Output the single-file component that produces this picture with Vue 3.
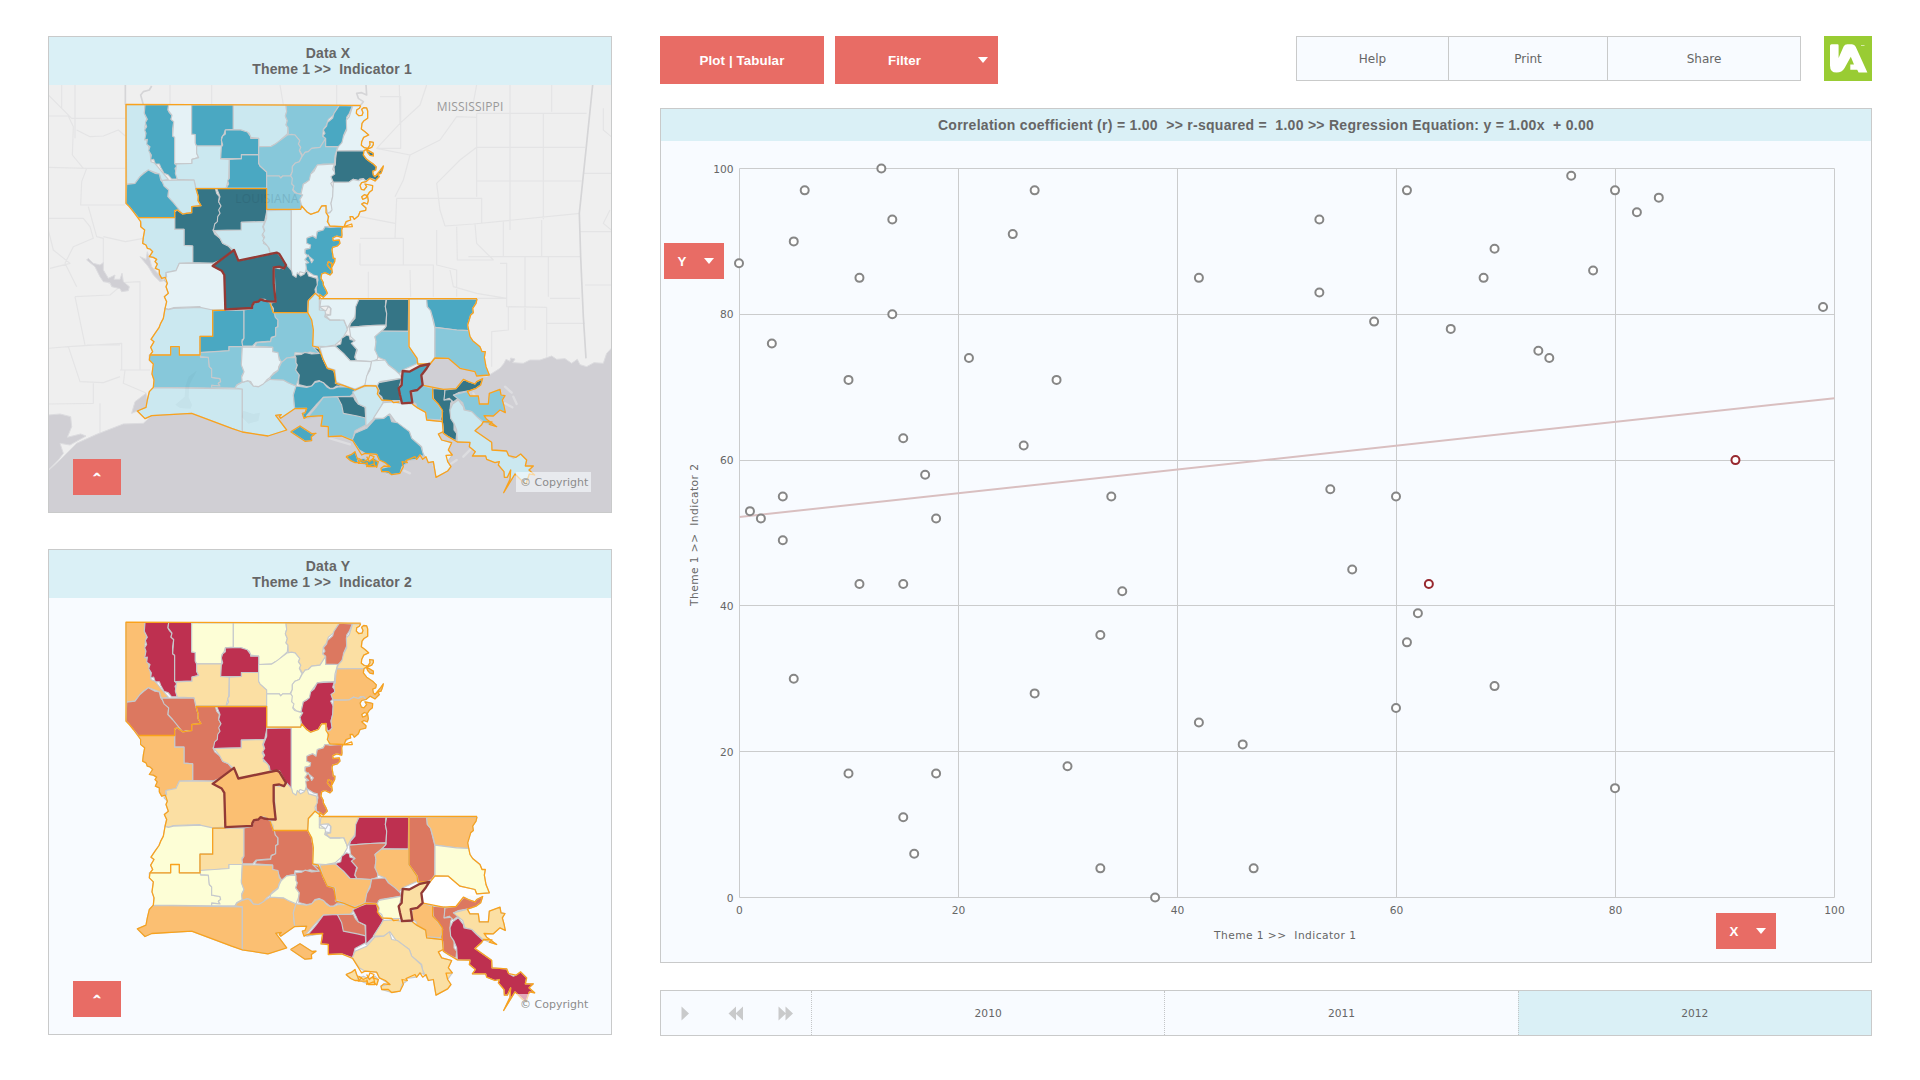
<script setup>
// Map tiles: every outline is written relative to the tile it lies in.
const tiles = { nw: [0, 0], ne: [840, 0], sw: [0, 720], se: [840, 720] }

function pts(tile, s) {
  const [ox, oy] = tiles[tile]
  return s.trim().split(/\s+/).map(p => {
    const [x, y] = p.split(',').map(Number)
    return `${x + ox},${y + oy}`
  }).join(' ')
}

const blues = ['#e5f2f6', '#cbe8f0', '#87c8da', '#4aa8c2', '#357586']
const reds = ['#fdfed6', '#fbdfa3', '#fbbf72', '#dc7860', '#be3050']

// [x class, y class, tile, outline]
const parishes = [
  [1, 2, 'nw', '258,224 315,224 313,250 320,265 315,290 318,322 330,365 333,395 345,400 365,425 385,448 365,453 358,432 340,425 325,420 310,430 300,440 285,460 260,463'],
  [3, 4, 'nw', '315,224 386,224 384,240 388,248 396,256 393,268 401,275 398,298 398,318 404,322 404,400 412,410 405,415 409,430 410,447 395,447 385,435 372,430 362,412 358,402 346,402 341,388 332,390 334,375 326,362 330,350 320,343 322,328 314,330 318,310 314,300 320,290 316,278 322,268 313,250'],
  [0, 4, 'nw', '386,224 455,224 455,312 466,314 466,340 470,348 470,370 476,383 456,388 456,400 404,401 404,322 398,318 401,275 393,268 396,256 384,240'],
  [3, 0, 'nw', '455,225 580,225 580,298 556,300 552,312 545,322 545,348 470,348 466,340 466,314 455,312'],
  [1, 0, 'nw', '580,225 738,225 740,245 736,258 742,272 738,285 744,292 742,312 722,330 718,338 706,342 694,349 656,350 656,325 632,322 628,310 605,300 580,300'],
  [1, 1, 'nw', '470,348 545,348 542,386 568,388 566,445 558,475 468,475 462,450 412,448 406,430 410,402 456,400 456,388 476,383 470,370'],
  [3, 1, 'nw', '568,388 604,386 604,374 656,374 656,400 660,408 680,426 680,475 558,475 566,462 563,452 568,445'],
  [3, 4, 'nw', '556,300 600,299 622,306 632,320 632,325 656,325 656,374 604,374 604,386 542,386 544,352 548,345 544,330 548,318 556,312'],
  [2, 1, 'nw', '738,225 898,226 880,256 865,268 860,285 850,298 848,318 857,325 852,340 840,352 815,355 805,365 795,367 790,380 778,360 782,352 775,342 779,332 765,315 745,315 744,292 738,285 742,272 736,258 740,245'],
  [2, 0, 'nw', '742,315 755,313 765,315 779,332 775,342 782,352 778,362 786,378 778,395 765,400 757,410 757,425 750,438 728,438 722,444 718,438 680,438 680,426 660,408 656,400 656,350 694,349 706,342 722,330'],
  [2, 0, 'nw', '857,325 857,350 893,350 888,368 885,378 883,402 850,402 832,405 815,428 810,450 790,462 783,492 770,490 760,480 755,462 752,438 757,425 757,410 765,400 778,395 786,380 795,367 805,365 815,355 840,352'],
  [2, 0, 'nw', '680,438 718,438 722,444 728,438 752,438 757,445 755,462 762,468 758,480 764,488 778,492 788,495 780,508 784,520 782,538 680,538'],
  [0, 4, 'nw', '850,404 883,402 878,418 886,428 876,445 878,455 872,460 880,475 878,500 873,520 878,540 862,552 858,527 845,528 835,545 812,553 800,545 785,528 780,508 788,495 783,492 790,462 798,458 808,450 812,432 822,424 832,405'],
  [3, 3, 'nw', '898,226 937,228 928,250 920,262 922,290 910,318 914,325 906,338 902,350 857,349 857,325 848,318 855,310 850,300 860,288 862,278 878,264 882,250'],
  [0, 1, 'ne', '98,228 122,228 118,235 110,240 109,250 116,257 126,256 129,248 125,238 131,233 140,234 143,243 143,265 132,272 126,280 124,297 135,305 146,315 131,322 125,335 124,346 133,353 143,355 150,345 149,335 160,337 160,344 155,352 140,358 132,362 50,363 55,350 66,338 70,320 80,300 79,270 88,260'],
  [4, 2, 'ne', '50,363 132,362 130,375 140,388 150,395 160,402 169,411 167,420 158,424 160,435 165,440 180,422 190,408 187,420 183,430 173,433 178,440 165,453 162,448 150,445 138,453 130,446 120,447 115,452 100,448 88,456 75,457 40,457 33,440 44,432 42,410 46,405 47,385'],
  [4, 2, 'ne', '140,360 150,366 160,370 160,378 150,376 143,368'],
  [0, 2, 'ne', '40,457 75,457 88,456 100,448 115,452 130,446 138,455 125,458 120,466 124,478 132,480 140,470 135,462 150,465 158,467 157,480 148,487 142,497 133,494 125,500 128,508 138,504 142,495 145,512 142,522 132,518 125,522 138,534 137,541 120,545 115,558 103,568 98,560 90,560 92,570 85,572 75,583 72,590 30,590 22,575 22,550 30,548 36,540 33,520 38,500'],
  [3, 3, 'nw', '260,463 285,460 300,440 312,430 325,420 345,430 358,432 362,450 380,470 386,480 384,500 398,515 412,528 420,540 404,542 404,563 295,563 280,545 268,530 258,520'],
  [1, 3, 'nw', '365,451 462,450 468,478 475,500 474,512 483,527 455,530 455,548 440,548 428,552 418,540 398,515 384,500 386,480 372,468'],
  [4, 3, 'nw', '468,475 526,475 530,490 538,500 536,515 543,528 540,560 533,578 528,580 524,595 519,600 524,612 540,625 548,640 565,648 575,660 580,675 518,700 458,698 458,648 432,646 432,598 404,598 404,545 412,540 428,552 455,548 455,530 483,527 474,512 475,500'],
  [4, 4, 'nw', '530,475 680,475 680,545 674,575 604,577 604,600 520,602 524,582 532,575 533,560 540,550 536,540 543,528 536,515 540,500'],
  [1, 1, 'nw', '522,602 604,600 604,577 674,575 668,590 674,605 666,615 674,628 670,640 684,648 690,668 690,672 595,692 580,660 565,648 548,640 540,625'],
  [1, 4, 'nw', '680,542 754,540 754,735 745,730 738,705 718,668 690,668 688,655 680,645 668,632 674,622 668,612 674,602 670,590 680,565'],
  [0, 0, 'nw', '754,539 782,538 785,528 800,545 812,553 835,545 845,528 858,527 862,552 868,590 855,590 850,600 832,605 828,625 818,618 805,622 800,632 812,645 810,655 795,658 796,670 805,680 795,690 806,700 800,712 795,730 780,725 775,735 765,742 757,738 754,725'],
  [3, 3, 'nw', '870,592 908,590 905,600 906,615 905,622 890,618 878,624 880,632 898,630 900,640 892,648 878,652 876,660 880,685 885,685 884,695 872,718 862,705 865,695 875,700 875,715 877,728 870,735 855,728 845,732 843,745 850,758 850,765 858,780 862,790 850,802 840,794 830,790 828,770 834,750 832,738 820,735 800,722 797,700 806,698 795,688 805,675 815,698 820,690 808,680 795,670 796,658 810,655 812,645 800,640 800,625 818,618 828,625 832,605 850,600 855,590'],
  [1, 2, 'nw', '295,563 404,563 404,598 432,598 432,646 458,648 458,698 418,700 408,722 378,728 376,742 365,745 358,732 358,720 346,715 352,702 345,695 350,688 340,682 328,680 338,665 330,657 322,655 318,645 308,640 310,622 314,600 305,592 302,575'],
  [0, 1, 'nw', '418,700 518,700 530,715 545,722 553,735 555,838 520,840 480,838 480,830 400,833 385,838 375,835 380,815 373,800 385,790 378,770 382,760 372,750 380,740 378,728 408,722'],
  [1, 0, 'nw', '375,836 385,839 400,835 480,832 518,840 518,919 480,919 480,975 418,975 418,950 392,950 392,975 330,975 338,965 332,952 342,935 333,928 345,910 357,893 362,880 370,865'],
  [4, 1, 'nw', '702,712 718,716 740,705 755,722 758,735 768,742 772,728 782,738 793,732 800,720 806,738 830,745 832,765 825,778 828,795 818,798 805,812 803,848 700,848 700,835 690,820 707,815'],
  [4, 2, 'nw', '518,708 582,660 595,692 710,668 718,675 738,705 730,717 718,710 700,712 703,760 707,815 685,816 675,808 662,808 655,815 642,817 637,826 640,835 556,837 553,735 545,722'],
  [3, 1, 'nw', '518,842 612,840 612,925 606,930 608,950 567,950 567,963 480,968 480,919 518,919'],
  [3, 3, 'nw', '612,840 637,836 640,820 655,815 662,808 675,810 685,816 692,820 700,848 705,848 706,860 714,870 713,890 707,893 707,918 694,922 692,933 648,937 638,948 608,948 606,935 612,925'],
  [2, 3, 'nw', '703,848 803,848 815,870 820,900 820,950 835,955 838,970 828,970 810,966 795,970 765,968 763,980 740,985 725,998 718,985 712,970 698,965 698,952 645,948 650,938 692,935 694,924 707,918 707,893 714,890 714,870 706,862'],
  [2, 0, 'sw', '328,255 392,255 392,230 418,230 418,255 480,255 482,262 505,262 508,290 515,297 515,322 540,326 542,335 535,340 540,348 515,346 515,354 340,352 342,330 336,312 340,282 328,270'],
  [2, 0, 'sw', '480,248 567,242 567,230 607,230 604,280 612,305 605,318 607,335 590,345 585,354 515,353 515,346 540,348 535,340 542,335 540,326 515,322 515,297 508,290 505,262 482,260'],
  [1, 2, 'sw', '340,353 607,357 607,486 575,475 455,430 335,437 315,446 292,423 318,412 322,390 328,365'],
  [1, 2, 'sw', '607,357 585,354 592,345 607,337 625,332 640,348 655,350 670,340 690,328 730,330 745,338 768,348 760,375 762,400 764,416 722,445 718,440 724,434 707,436 740,480 684,498 607,486'],
  [0, 2, 'sw', '607,231 698,232 698,245 714,248 718,270 724,275 716,290 715,300 700,310 690,322 680,330 670,342 655,350 640,348 632,335 622,332 607,337 605,322 612,305 604,285'],
  [2, 0, 'sw', '724,278 740,264 755,262 768,263 768,278 772,285 767,300 778,315 775,330 768,348 745,338 730,330 690,328 692,320 714,302 718,290'],
  [4, 3, 'sw', '764,255 785,253 795,247 815,252 838,250 818,230 840,238 848,265 862,295 880,300 888,320 886,340 910,348 890,348 880,355 870,355 858,345 850,338 838,332 825,335 815,348 800,350 776,344 776,330 778,315 767,300 772,285 768,278 768,263'],
  [3, 2, 'sw', '768,348 800,352 815,348 825,337 838,334 850,338 860,350 870,356 880,356 895,350 940,352 945,365 930,380 900,382 850,382 828,405 800,437 802,442 792,445 787,430 795,428 800,415 764,414 760,375'],
  [3, 2, 'sw', '752,485 780,468 816,491 828,490 814,500 815,512 795,514'],
  [2, 4, 'sw', '850,382 892,380 903,390 908,405 910,423 950,432 976,442 977,465 945,482 938,510 905,498 865,500 865,470 843,468 848,437 800,445 828,412'],
  [4, 3, 'se', '52,380 100,379 106,392 115,402 135,412 137,444 112,438 70,430 65,405'],
  [1, 4, 'se', '98,366 120,355 140,348 170,348 175,375 190,395 182,412 162,445 138,470 137,412 115,402 108,385'],
  [1, 0, 'sw', '805,92 818,80 825,70 838,75 838,110 855,122 858,140 870,150 900,150 910,148 920,170 922,180 908,205 885,225 858,230 818,228 820,180 815,150 803,128'],
  [0, 1, 'sw', '843,87 956,87 950,120 945,140 930,160 922,175 912,150 870,150 858,138 870,135 872,115 862,108 840,110'],
  [4, 4, 'se', '117,88 198,88 196,110 200,130 198,165 150,167 88,172 92,160 105,145 107,110'],
  [4, 4, 'se', '200,88 266,88 265,184 185,183 198,170 200,130 196,110'],
  [0, 3, 'se', '88,172 150,167 198,165 196,172 185,183 165,200 168,215 165,240 175,250 172,268 155,275 110,272 104,260 112,240 92,218 105,212 92,200'],
  [4, 4, 'se', '45,228 62,222 65,205 80,195 88,198 90,208 104,212 94,220 110,238 104,262 110,272 92,274 70,250'],
  [2, 2, 'se', '165,200 185,183 266,184 266,230 290,265 293,280 248,300 235,314 225,300 205,285 195,270 175,262 165,240 168,215'],
  [0, 3, 'se', '267,88 320,88 322,110 332,122 340,155 345,175 344,262 335,275 318,283 295,285 292,265 267,230'],
  [3, 2, 'se', '320,88 471,87 468,100 458,115 460,128 452,135 443,165 446,182 410,180 345,172 340,150 332,122 322,110'],
  [2, 0, 'se', '345,172 410,180 446,182 450,200 458,212 480,230 486,245 496,245 493,262 498,290 508,315 470,318 465,305 420,295 385,265 345,264'],
  [0, 2, 'se', '0,232 45,228 70,250 90,272 155,275 152,290 145,305 135,345 105,357 70,345 48,335 45,300 22,293 10,270'],
  [0, 3, 'se', '155,273 195,270 205,285 225,300 240,314 245,325 180,335 175,347 135,345 140,318 150,300'],
  [4, 0, 'se', '176,338 245,325 238,350 242,392 190,392 185,380 175,372 178,362 172,348'],
  [2, 2, 'se', '308,346 338,355 338,385 360,402 368,420 368,450 320,447 317,427 290,412 288,402 277,395 275,368 290,360'],
  [3, 1, 'se', '248,303 268,305 300,288 328,282 318,298 304,316 308,345 292,360 272,364 277,398 246,400 240,375 236,355 245,345 246,325'],
  [4, 3, 'se', '338,355 375,358 373,390 398,388 392,400 390,420 393,445 402,460 402,480 410,490 408,512 385,500 370,490 368,460 362,448 368,425 355,405 340,385'],
  [4, 3, 'se', '375,360 408,356 432,328 445,335 465,342 470,335 488,326 482,345 468,355 450,362 415,368 402,375 425,393 410,388 400,396 388,385 372,390'],
  [2, 1, 'se', '400,375 442,364 450,378 475,378 478,402 505,402 508,370 540,358 543,375 555,377 547,390 552,408 556,428 540,420 520,438 495,438 500,448 530,470 505,462 490,455 470,440 455,425 435,420 428,398'],
  [1, 4, 'se', '415,390 430,410 432,420 455,425 470,440 490,458 485,464 465,482 515,517 516,540 560,543 566,557 580,565 588,562 602,552 620,570 616,588 640,588 627,600 644,615 628,612 618,642 608,635 585,612 551,668 570,628 572,600 562,622 553,622 552,605 535,585 538,575 525,578 500,568 497,558 457,558 466,545 448,530 450,517 412,516 410,480 402,460 392,445 390,420 398,402'],
  [0, 1, 'se', '160,445 190,398 220,396 240,400 277,402 290,412 317,427 320,450 367,455 370,485 355,492 365,510 395,518 385,540 397,555 383,575 393,590 383,603 348,622 340,575 325,578 308,548 305,530 275,505 268,485 230,460 210,432 190,445'],
  [3, 1, 'se', '97,510 105,490 140,475 165,447 192,445 208,432 215,455 232,458 268,485 275,505 303,530 312,560 300,555 290,568 258,572 262,578 246,590 240,610 215,614 185,605 183,595 205,590 210,590 178,570 170,553 135,550 118,540'],
  [3, 1, 'se', '78,560 95,553 105,545 110,560 118,578 105,578 92,572'],
  [3, 1, 'se', '112,572 130,565 145,572 165,565 175,575 172,590 150,590 130,583'],
]

// Regional borders and the state outline.
const borders = [
  ['nw', '962,226 258,223 258,520 268,530 280,545 302,575 302,590 314,600 310,622 308,640 318,645 322,655 330,657 338,665 328,680 340,682 350,688 345,695 352,702 346,715 358,720 358,732 365,745 376,742 382,760 378,770 385,790 373,800 380,815 375,836 370,865 362,880 357,893 345,910 333,928 342,935 332,952 338,965 330,975 328,990 340,1002 336,1032 342,1050 340,1072 328,1085 322,1110 318,1132 292,1143 315,1166 335,1157 455,1150 575,1195 607,1206 684,1218 740,1200 707,1156 724,1154 718,1160 722,1165 764,1136 800,1135 795,1148 787,1150 792,1165 802,1160 848,1157 843,1188 865,1190 865,1220 905,1218 938,1232'],
  ['ne', '122,228 118,235 110,240 109,250 116,257 126,256 129,248 125,238 131,233 140,234 143,243 143,265 132,272 126,280 124,297 135,305 146,315 131,322 125,335 124,346 133,353 143,355 150,345 149,335 160,337 160,344 155,352 140,358 132,362 130,375 140,388 150,395 160,402 169,411 167,420 158,424 160,435 165,440 180,422 190,408 187,420 183,430 173,433 178,440 165,453 150,445 138,455 125,458 120,466 124,478 132,480 140,470 135,462 150,465 158,467 157,480 148,487 142,497 133,494 125,500 128,508 138,504 142,495 145,512 142,522 132,518 125,522 138,534 137,541 120,545 115,558 103,568 98,560 90,560 92,570 78,575 72,590 95,582 97,590 68,591 65,600 66,615 65,622 50,618 38,624 40,632 58,630 60,640 52,648 38,652 36,660 40,685 45,685 44,695 32,718 22,705 25,695 35,700 35,715 37,728 30,735 15,728 5,732 3,745 10,758 10,765 18,780 22,790 10,802 0,794 -2,808'],
  ['ne', '140,358 150,364 160,370 160,378 150,376 143,368 140,360'],
  ['nw', '295,563 404,563 404,542 412,540 428,552 440,550 455,548 455,530 483,527 474,512 475,500 468,476 680,476 680,538 782,538 785,528 800,545 812,553 835,545 845,528 858,527 858,548 866,560 862,575 870,588 910,590'],
  ['sw', '330,255 392,255 392,230 418,230 418,255 480,255 480,199 518,199 518,121 556,121'],
  ['sw', '690,100 700,128 803,128 805,92 825,70 838,80 843,86 1311,86'],
  ['sw', '803,128 815,150 820,180 818,228 835,232 848,265 862,295 882,301 888,340 910,346 945,360 975,347 1008,348 1015,360 1012,372 1025,390 1055,392 1060,398 1078,396'],
  ['se', '267,88 267,230 291,265 293,282 328,282'],
  ['se', '277,402 290,412 317,427 320,450 367,455 367,420 355,402 338,385 338,355'],
  ['se', '310,346 370,358 408,356 430,328 445,335 465,342 470,335 488,326 482,345 468,355 442,364 450,378 475,378 478,402 505,402 508,370 540,358 543,375 555,377 547,390 552,408 556,428 540,420 520,438 492,437 500,448 530,470 508,463 516,456 490,455 485,464 465,482 515,517 516,540 560,543 566,557 588,562 602,552 620,570 616,588 640,588 627,600 644,615 628,612 618,642 608,635 585,612 551,668 570,628 572,600 562,622 553,622 552,605 535,585 538,575 525,578 500,568 497,558 457,558 466,545 448,530 450,517 412,516 385,500 370,490 367,455'],
  ['se', '370,485 355,492 365,510 395,518 385,540 397,555 378,556 383,575 393,590 383,603 348,622 340,575 325,578 318,560 308,568 300,555 290,568 285,560 258,572 262,578 246,575 250,590 240,610 215,614 205,605 185,605 183,595 192,588 210,590 196,578 178,570 170,553 135,550 125,555 97,510'],
  ['se', '78,560 95,553 105,545 110,560 118,578 105,578 92,572 78,560'],
  ['se', '115,565 130,575 145,568 150,555 162,560 158,570 175,575 170,592 160,582 140,590 142,580 115,580 125,570 115,565'],
  ['se', '140,560 148,575 160,565 165,590 145,590 140,575'],
  ['sw', '752,485 780,468 816,491 828,490 814,500 815,512 795,514 752,485'],
  ['se', '471,87 468,100 458,115 460,128 452,135 443,165 450,200 458,212 480,230 486,245 496,245 493,262 498,290 508,315 470,318 465,305 420,295 385,265 345,264 328,285'],
]

const hook = pts('sw', '838,110 838,120 858,122 866,108 873,116 872,135 856,132 854,140 870,150 900,150')
const lake = pts('se', '345,264 385,265 420,295 465,305 472,325 450,322 432,328 408,356 370,358 308,346 304,316')
const selected = [
  pts('nw', '518,708 582,660 595,692 710,668 718,672 738,705 732,715 718,710 701,712 701,760 707,815 685,814 672,812 662,808 655,815 642,817 637,826 636,834 556,838 553,735 545,722'),
  pts('se', '248,303 268,305 300,288 328,282 318,298 304,316 308,345 292,360 272,364 277,398 246,400 240,375 236,355 245,345 246,325'),
]

const ocean = [
  'M25 1322 L60 1290 L110 1240 L170 1213 L250 1182 L310 1180 L335 1157 L455 1150 L607 1206 L690 1130 L760 1100 L900 1090 L1100 1060 L1200 1040 L1250 1040 L1340 1040 L1380 1015 L1392 1000 L1398 988 L1410 994 L1412 984 L1425 987 L1418 998 L1450 1000 L1470 990 L1500 990 L1535 978 L1550 988 L1575 986 L1595 1000 L1612 988 L1620 1004 L1640 1010 L1662 998 L1690 1000 L1700 970 L1714 955 V1450 H25Z',
  'M25 1155 L60 1152 L92 1160 L95 1190 L82 1222 L122 1212 L138 1218 L90 1245 L60 1240 L70 1270 L55 1290 L25 1320Z',
  'M285 1115 L318 1090 L322 1110 L318 1132 L292 1143 L275 1150Z',
  'M145 685 L160 700 L180 705 L190 698 L190 720 L205 745 L225 735 L222 748 L240 748 L246 730 L250 755 L268 770 L265 782 L245 785 L240 776 L215 770 L210 758 L190 755 L180 740 L165 710 L140 690Z',
  'M300 680 L318 688 L322 665 L330 690 L335 710 L358 735 L372 752 L360 755 L340 735 L325 710Z',
]
const counties = 'M65 165V235M105 165V325M25 195L95 265M95 265H256M25 258H85L100 290L97 375L130 415M110 300L150 320L190 318L235 300L256 318M25 412L140 415H256M140 415L125 455L122 525H256M145 530L170 620L190 625V700M25 565H130L150 590L160 625L100 650L75 700L110 770M190 620L256 635L310 625M25 600L40 660L90 700L30 715M205 760L300 755V1020M105 800L135 945M25 955L85 950L245 940V1020M85 950L120 1055L190 1058L240 1040M105 800L210 795L240 770M140 945H240M240 1020H330M160 1060V1120L25 1122M180 1120V1215M255 1020L250 1060L320 1090M390 165V224M515 165V224M720 165L730 224M890 165V224M1020 200H1082V355H1010M1078 165L1080 280L1010 355L1110 375L1200 330L1250 260L1310 262M1160 165L1140 225L1080 280M1310 165L1295 245M1410 165V600M1535 165V245M1310 250H1640M1310 250V500M1310 352H1635M1310 453H1625M1510 250V568M1070 505H1325V580M1070 505L1065 625M1110 375L1090 450L1065 500M1310 352L1260 390L1190 460L1200 540L1215 588M1215 588L1300 582L1620 550M960 560L1065 580M960 625H1090V705M960 640V705M960 705H1180V800M1190 600V705L1250 720V800M1250 590L1252 690H1360L1310 640L1305 582M1390 575V680M1505 570V680M1285 680H1620M1455 680V900M1525 680V800M1380 700H1400V830L1520 832M1520 832V980M1405 830V900L1355 905V1010M985 725V805M1110 720L1112 800M1230 720L1240 770L1310 790L1400 805M1310 805H1400M1620 605H1714M1630 430H1714M1635 765H1714M1520 880H1635M1690 235L1690 300L1714 320M1710 540L1690 580L1714 600M1530 805H1620'
const stateLines = 'M256 165V224M310 224L302 195L310 185L328 180L335 168M962 226L970 215L955 205L950 190L965 188L980 195L978 165M1658 165L1640 340L1618 550L1622 680L1630 860L1638 985'

const maps = [
  { id: 'x', title: 'Data X', indicator: 'Indicator 1', colours: blues, col: 0, view: '27 165 1686 1281', base: true },
  { id: 'y', title: 'Data Y', indicator: 'Indicator 2', colours: reds, col: 1, view: '27 150.500 1686 1308', base: false },
]
const shapes = parishes.map(p => ({ cls: [p[0], p[1]], d: pts(p[2], p[3]) }))
const lines = borders.map(b => pts(b[0], b[1]))

// Scatter plot
const data = [
  [13, 100], [6, 97], [14, 93], [5, 90], [0, 87], [11, 85], [14, 80], [3, 76], [10, 71], [15, 63], [17, 58], [4, 55],
  [1, 53], [2, 52], [18, 52], [4, 49], [11, 43], [15, 43], [5, 30], [10, 17], [18, 17], [15, 11], [16, 6], [27, 97],
  [25, 91], [21, 74], [29, 71], [26, 62], [34, 55], [35, 42], [33, 36], [27, 28], [30, 18], [33, 4], [38, 0], [42, 85],
  [53, 93], [53, 83], [61, 97], [58, 79], [65, 78], [54, 56], [60, 55], [56, 45], [62, 39], [61, 35], [60, 26], [42, 24],
  [46, 21], [47, 4], [76, 99], [80, 97], [84, 96], [82, 94], [69, 89], [68, 85], [78, 86], [73, 75], [74, 74], [69, 29],
  [80, 15], [99, 81], [91, 60, 1], [63, 43, 1],
]
const sx = v => 78.5 + v * 10.95
const sy = v => 756.5 - v * 7.29
const ticks = [0, 20, 40, 60, 80, 100]
const years = ['2010', '2011', '2012']
</script>

<template>
  <div class="page">
    <div class="left">
      <section v-for="m in maps" :key="m.id" class="panel map" :class="'map-' + m.id">
        <header class="map-head">
          <div>{{ m.title }}</div>
          <div>&nbsp; Theme 1 &gt;&gt;&nbsp; {{ m.indicator }}</div>
        </header>
        <div class="map-body">
          <svg class="map-svg" :viewBox="m.view" preserveAspectRatio="none">
            <g v-if="m.base">
              <rect x="0" y="100" width="1800" height="1400" fill="#efefef" />
              <path :d="counties" fill="none" stroke="#e4e4e5" stroke-width="3.500" stroke-linejoin="round" />
              <path :d="stateLines" fill="none" stroke="#d5d5d7" stroke-width="5" stroke-linejoin="round" />
              <path v-for="(o, i) in ocean" :key="i" :d="o" fill="#d0cfd4" stroke="#dcdcdf" stroke-width="3" stroke-linejoin="round" />
              <path d="M1300 1090l12 20l-14 14M1395 1070l20 18M1420 1100l10 22M1395 1120l22 12M1250 1290l-30 20l-40 -4M870 1225l60 18M1060 1320l-20 10M1110 1330l-18 -8M1300 1250l-30 30" fill="none" stroke="#dddde0" stroke-width="7" stroke-linecap="round" />
              <text x="1190" y="242" class="place" textLength="200">MISSISSIPPI</text>
            </g>
            <polygon :points="lake" :fill="m.base ? '#d0cfd4' : '#ffffff'" />
            <g stroke="#c6c9cc" stroke-width="3.4" stroke-linejoin="round">
              <polygon v-for="(s, i) in shapes" :key="i" :points="s.d" :fill="m.colours[s.cls[m.col]]" />
              <polyline :points="hook" fill="none" />
            </g>
            <g v-if="m.base" fill="#1c3c4c">
              <path d="M470 1022l-24 18l-10 30l-2 30l-28 24l14 10l32 2l4 -12l-10 -22l2 -36z" opacity=".03" />
              <path d="M610 1142l30 10l20 -4l-5 25l-30 8l-20 -20z" opacity=".03" />
              <text x="586" y="519" class="state" textLength="190">LOUISIANA</text>
            </g>
            <g fill="none" stroke="#faa21b" stroke-width="3.8" stroke-linejoin="round">
              <polyline v-for="(l, i) in lines" :key="i" :points="l" />
            </g>
            <g fill="none" stroke="#933a35" stroke-width="7" stroke-linejoin="round">
              <polygon v-for="(l, i) in selected" :key="i" :points="l" />
            </g>
          </svg>
          <button class="btn up">^</button>
          <span class="copy">© Copyright</span>
        </div>
      </section>
    </div>

    <div class="right">
      <div class="bar">
        <button class="btn plot">Plot | Tabular</button>
        <button class="btn filter"><span>Filter</span><i class="caret" /></button>
        <nav class="menu">
          <a class="help">Help</a>
          <a class="print">Print</a>
          <a class="share">Share</a>
        </nav>
        <svg class="logo" viewBox="0 0 48 45">
          <rect width="48" height="45" fill="#99cc33" />
          <path fill="#fff" d="M6 9.8Q6 8.3 7.6 8.3H13.6Q14.6 8.3 14.6 9.5V22L19.6 10.6Q20.8 8.3 23.4 8.3H28Q30.6 8.3 31.7 10.8L43.4 36.6H34.6L33.2 33.8H26.3V28.6H30L26.8 20.8L20.6 32Q18 36.6 12.6 36.6Q6 36.6 6 29.5Z" />
          <path d="M37 9.5h3.500" stroke="#d4eaa5" />
        </svg>
      </div>

      <section class="panel chart">
        <header class="chart-head">Correlation coefficient (r) = 1.00&nbsp; &gt;&gt; r-squared =&nbsp; 1.00 &gt;&gt; Regression Equation: y = 1.00x&nbsp; + 0.00</header>
        <div class="chart-body">
          <svg class="plot-svg" width="1210" height="821" viewBox="0 0 1210 821">
            <g stroke="#cbcccd">
              <path v-for="t in ticks" :key="'v' + t" :d="`M${sx(t)} 27.500V756.500`" />
              <path v-for="t in ticks" :key="'h' + t" :d="`M78.500 ${Math.floor(sy(t)) + 0.5}H1173.500`" />
            </g>
            <path :d="`M${sx(0)} ${sy(52.2)}L${sx(100)} ${sy(68.5)}`" stroke="#d9bfc0" stroke-width="2" />
            <circle v-for="(p, i) in data" :key="i" :cx="sx(p[0]) - 0.5" :cy="sy(p[1])" r="4" fill="#fff"
              :stroke="p[2] ? '#97282f' : '#868686'" stroke-width="2" />
            <g class="tick" text-anchor="middle">
              <text v-for="t in ticks" :key="t" :x="sx(t)" y="773">{{ t }}</text>
            </g>
            <g class="tick" text-anchor="end">
              <text v-for="t in ticks" :key="t" x="72.500" :y="sy(t) + 4">{{ t }}</text>
            </g>
            <text class="tick" x="553" y="798" textLength="142">Theme 1 &gt;&gt;&nbsp; Indicator 1</text>
            <text class="tick" transform="translate(37 465) rotate(-90)" textLength="142">Theme 1 &gt;&gt;&nbsp; Indicator 2</text>
          </svg>
          <button class="btn axis axis-y"><span>Y</span><i class="caret" /></button>
          <button class="btn axis axis-x"><span>X</span><i class="caret" /></button>
        </div>
      </section>

      <div class="panel timeline">
        <div class="controls">
          <svg viewBox="0 0 150 44" width="150" height="44" fill="#c9cacb">
            <path d="M20.500 15.500l7.500 7l-7.500 7z" />
            <path d="M75 15.500v14l-7.500-7zM82 15.500v14l-7.500-7z" />
            <path d="M117.500 15.500l7.500 7l-7.500 7zM124.500 15.500l7.500 7l-7.500 7z" />
          </svg>
        </div>
        <div v-for="y in years" :key="y" class="year" :class="{ on: y === '2012' }">{{ y }}</div>
      </div>
    </div>
  </div>
</template>

<style>
body { background: #fff; }
</style>

<style scoped>
* { box-sizing: border-box; }
.page {
  display: flex;
  gap: 48px;
  width: 1920px;
  height: 1080px;
  padding: 36px 48px;
  font-family: "DejaVu Sans", Verdana, sans-serif;
  color: #666;
}
.left { display: flex; flex-direction: column; gap: 36px; width: 564px; }
.right { display: flex; flex-direction: column; width: 1212px; }
.panel { border: 1px solid #c9caca; background: #f8fbff; }
.map { display: flex; flex-direction: column; }
.map-x { height: 477px; }
.map-y { height: 486px; }
.map-head {
  flex: none;
  height: 48px;
  padding: 8px 4px 0 0;
  background: #daf0f6;
  font: bold 14px/16px "Liberation Sans", Arial, sans-serif;
  letter-spacing: .18px;
  text-align: center;
  color: #666;
}
.map-body { position: relative; flex: 1; min-height: 0; overflow: hidden; }
.map-svg { display: block; width: 100%; height: 100%; }
.place { font: 36px "Open Sans", sans-serif; fill: #9a9a9a; }
.state { font: 36px "Open Sans", sans-serif; opacity: .14; }
.btn {
  border: 0;
  padding: 0;
  background: #e86c65;
  color: #fff;
  font: bold 13.33px "Liberation Sans", Arial, sans-serif;
  letter-spacing: .1px;
  text-align: center;
}
.up {
  position: absolute;
  left: 24px;
  bottom: 17px;
  width: 48px;
  height: 36px;
  font: bold 10px "DejaVu Sans", sans-serif;
  -webkit-text-stroke: .7px #fff;
}
.copy {
  position: absolute;
  left: 467px;
  bottom: 20px;
  width: 75px;
  height: 20px;
  padding-left: 4px;
  background: rgba(248, 251, 255, .6);
  color: #8c8c8c;
  font-size: 11px;
  line-height: 22px;
  white-space: nowrap;
}
.bar { display: flex; height: 48px; }
.plot { width: 164px; }
.filter { display: flex; align-items: center; width: 163px; margin-left: 11px; }
.filter span { width: 139px; }
.caret { width: 0; height: 0; border: 5.5px solid transparent; border-top: 6px solid #fff; border-bottom: 0; }
.filter .caret { margin-left: 4px; }
.menu { display: flex; width: 505px; height: 45px; margin-left: 298px; border: 1px solid #c9caca; background: #f8fbff; font-size: 12px; line-height: 45px; text-align: center; }
.menu a { height: 43px; }
.help { width: 152px; border-right: 1px solid #c9caca; }
.print { width: 159px; border-right: 1px solid #c9caca; }
.share { width: 192px; }
.logo { width: 48px; height: 45px; margin-left: 23px; flex: none; }
.chart { height: 855px; margin-top: 24px; }
.chart-head {
  height: 32px;
  background: #daf0f6;
  font: bold 14px/32px "Liberation Sans", Arial, sans-serif;
  letter-spacing: .28px;
  text-align: center;
  white-space: nowrap;
}
.chart-body { position: relative; height: 821px; }
.plot-svg { display: block; }
.tick { font-size: 10.67px; fill: #666; }
.axis { position: absolute; display: flex; align-items: center; width: 60px; height: 36px; }
.axis span { width: 36px; }
.axis .caret { margin-left: 4px; }
.axis-y { left: 3px; top: 102px; }
.axis-x { left: 1055px; top: 772px; }
.timeline { display: flex; height: 46px; margin-top: 27px; font-size: 10.67px; line-height: 46px; text-align: center; }
.controls { width: 150px; height: 44px; flex: none; }
.controls svg { display: block; }
.year { flex: 1; height: 44px; border-left: 1px dotted #c4c6c8; }
.on { background: #daf0f6; }
</style>
